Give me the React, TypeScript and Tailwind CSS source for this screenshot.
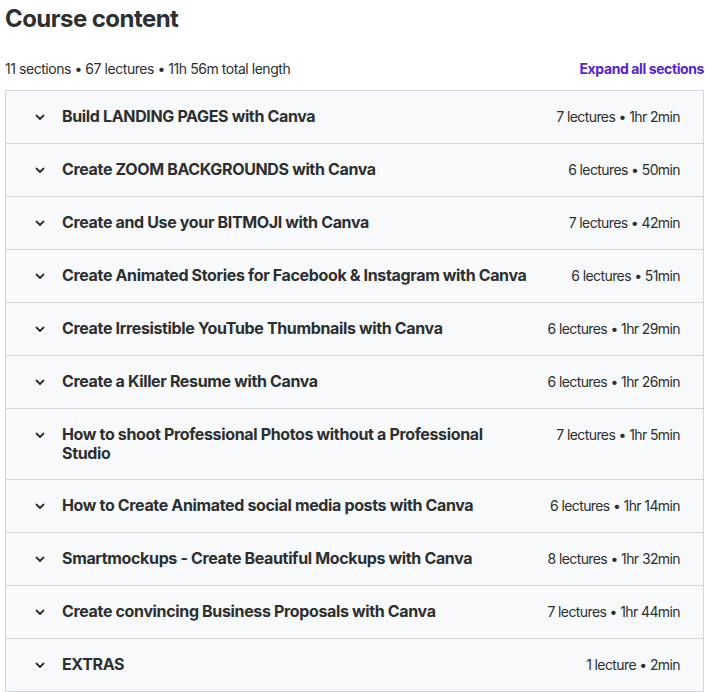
import React from "react";

const sections: [string, string][] = [
  ["Build LANDING PAGES with Canva", "7 lectures • 1hr 2min"],
  ["Create ZOOM BACKGROUNDS with Canva", "6 lectures • 50min"],
  ["Create and Use your BITMOJI with Canva", "7 lectures • 42min"],
  ["Create Animated Stories for Facebook & Instagram with Canva", "6 lectures • 51min"],
  ["Create Irresistible YouTube Thumbnails with Canva", "6 lectures • 1hr 29min"],
  ["Create a Killer Resume with Canva", "6 lectures • 1hr 26min"],
  ["How to shoot Professional Photos without a Professional Studio", "7 lectures • 1hr 5min"],
  ["How to Create Animated social media posts with Canva", "6 lectures • 1hr 14min"],
  ["Smartmockups - Create Beautiful Mockups with Canva", "8 lectures • 1hr 32min"],
  ["Create convincing Business Proposals with Canva", "7 lectures • 1hr 44min"],
  ["EXTRAS", "1 lecture • 2min"],
];

function Chevron() {
  return (
    <svg width="16" height="16" viewBox="0 0 16 16" className="shrink-0 mt-[2px]">
      <path d="M4.5 6.5 L8 10 L11.5 6.5" fill="none" stroke="#2d2f31" strokeWidth="1.8" strokeLinecap="round" strokeLinejoin="round" />
    </svg>
  );
}

export default function App() {
  return (
    <div className="w-[705px] h-[692px] bg-white text-[#2d2f31] overflow-hidden" style={{ fontFamily: "Inter, 'Noto Sans', sans-serif" }}>
      <h2 className="pl-[5px] pt-[4px] text-[24px] leading-[30px] font-bold tracking-[-0.55px]">Course content</h2>
      <div className="flex items-center justify-between pl-[5px] pr-[1px] mt-[24px] h-[20px]">
        <span className="text-[14px] tracking-[-0.45px]">11 sections • 67 lectures • 11h 56m total length</span>
        <span className="text-[14px] font-bold text-[#5624d0] tracking-[-0.4px]">Expand all sections</span>
      </div>
      <div className="ml-[5px] mr-[1px] mt-[12px] border border-[#d1d7dc] bg-[#f7f9fa]">
        {sections.map(([t, m], i) => (
          <div key={i} className={`flex items-start pl-[26px] pr-[23px] py-[16px] ${i > 0 ? "border-t border-[#d1d7dc]" : ""}`}>
            <Chevron />
            <div className="flex-1 ml-[14px] text-[16px] leading-[19px] font-bold tracking-[-0.35px]">{t}</div>
            <div className="ml-6 text-[14px] leading-[20px] whitespace-nowrap tracking-[-0.6px]">{m}</div>
          </div>
        ))}
      </div>
    </div>
  );
}
